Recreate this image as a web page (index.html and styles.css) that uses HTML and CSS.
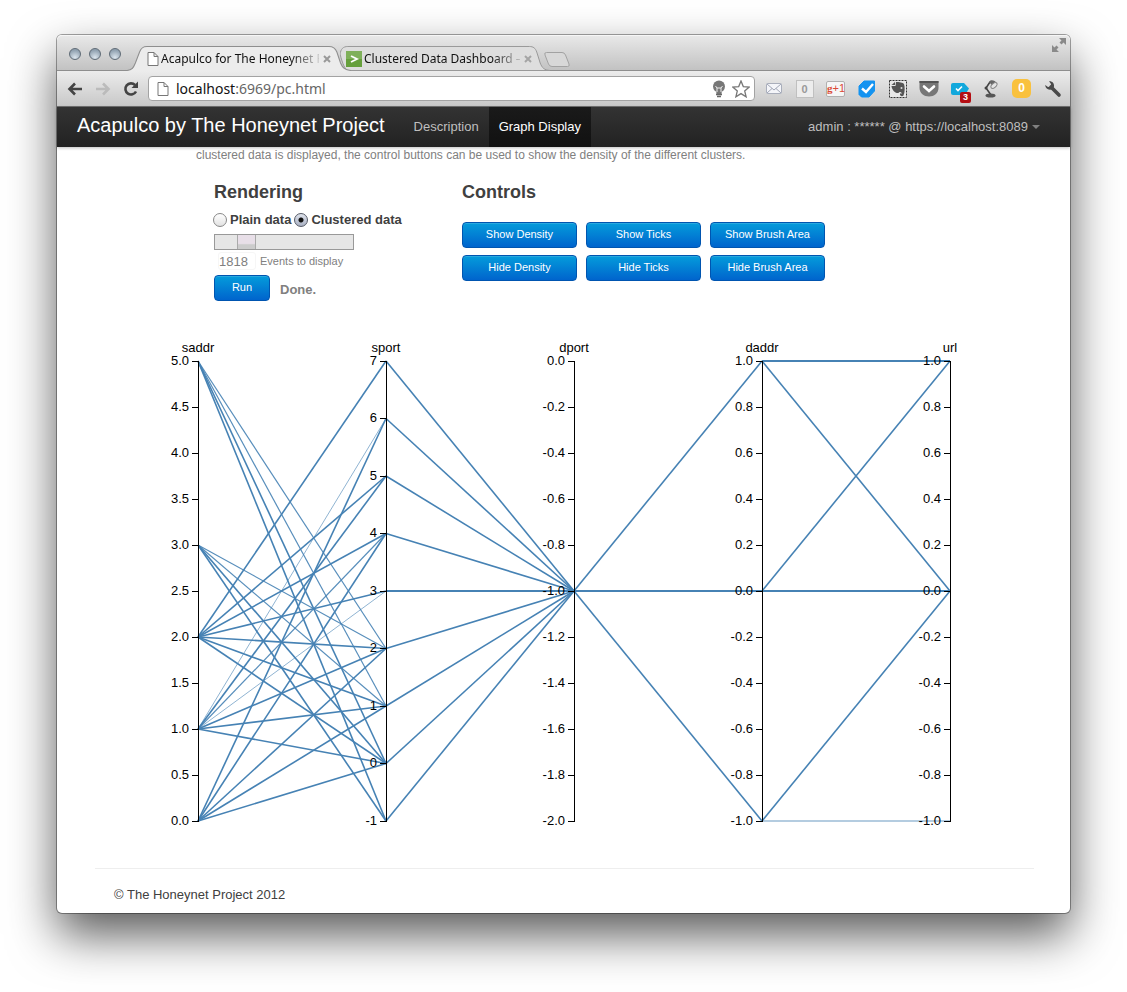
FILE: index.html
```html
<!DOCTYPE html>
<html lang="en">
<head>
<meta charset="utf-8">
<title>Acapulco for The Honeynet Project</title>
<link rel="stylesheet" href="styles.css">
</head>
<body>
<div class="window">
  <header class="titlebar">
    <div class="lights"><span class="light"></span><span class="light"></span><span class="light"></span></div>
    <div class="tabs">
      <div class="tab tab-active">
        <svg class="tab-shape" viewBox="0 0 214 25" preserveAspectRatio="none"><path d="M0 24.5C5 24 6 22 8 17L12 6C13.500 2 15 .5 19 .5H193C197 .5 199 2 200.500 6L204 17C206 22 208 24 214 24.500V25H0Z" fill="#ececec"/><path d="M0 24.500C5 24 6 22 8 17L12 6C13.500 2 15 .5 19 .5H193C197 .5 199 2 200.500 6L204 17C206 22 208 24 214 24.500" fill="none" stroke="#8e8e8e"/></svg>
        <svg class="page-icon" viewBox="0 0 12 14"><path d="M1 .5H7L11 4.500V13.500H1ZM7 .5V4.500H11" fill="#fff" stroke="#777"/></svg>
        <span class="tab-title">Acapulco for The Honeynet P</span>
        <button class="close" aria-label="Close tab"><svg viewBox="0 0 8 8"><path d="M1 1L7 7M7 1L1 7" stroke="#999" stroke-width="2"/></svg></button>
      </div>
      <div class="tab">
        <svg class="tab-shape" viewBox="0 0 214 25" preserveAspectRatio="none"><path d="M0 8C1 3 3 .5 8 .5H193C197 .5 199 2 200.500 6L204 17C206 22 208 24 214 24.500H8C5 23 3 19 0 8Z" fill="#dedede" stroke="#999"/></svg>
        <svg class="fav" viewBox="0 0 16 16"><rect width="16" height="16" fill="#66a03c"/><rect width="16" height="8" fill="#7fb05a"/><path d="M5 5L11 8L5 11" fill="none" stroke="#fff" stroke-width="1.800"/></svg>
        <span class="tab-title">Clustered Data Dashboard –</span>
        <button class="close" aria-label="Close tab"><svg viewBox="0 0 8 8"><path d="M1 1L7 7M7 1L1 7" stroke="#a5a5a5" stroke-width="2"/></svg></button>
      </div>
      <button class="new-tab" aria-label="New tab"><svg viewBox="0 0 28 17"><path d="M3.500 1.500H19Q21.500 1.500 22.500 4L26 13Q27 15.500 24.500 15.500H9Q6.500 15.500 5.500 13L2 4Q1 1.500 3.500 1.500Z" fill="#d8d8d8" stroke="#a2a2a2"/></svg></button>
    </div>
    <button class="expand" aria-label="Full screen"><svg viewBox="0 0 16 16"><path d="M8 1H15V8L12.500 5.500L10.500 7.500L8.500 5.500L10.500 3.500ZM8 15H1V8L3.500 10.500L5.500 8.500L7.500 10.500L5.500 12.500Z" fill="#8a8a8a"/></svg></button>
  </header>

  <div class="toolbar">
    <button class="tool nav-tool" aria-label="Back"><svg viewBox="0 0 18 18"><path d="M16 9H4M9 3.500L3.500 9L9 14.500" fill="none" stroke="#444" stroke-width="2.600"/></svg></button>
    <button class="tool nav-tool" aria-label="Forward"><svg viewBox="0 0 18 18"><path d="M2 9H14M9 3.500L14.500 9L9 14.500" fill="none" stroke="#bbb" stroke-width="2.600"/></svg></button>
    <button class="tool nav-tool" aria-label="Reload"><svg viewBox="0 0 18 18"><path d="M14 11.500A5.600 5.600 0 1 1 13 5" fill="none" stroke="#444" stroke-width="2.600"/><path d="M16 1.500V8H9.500Z" fill="#444"/></svg></button>
    <div class="address">
      <svg class="page-icon" viewBox="0 0 12 14"><path d="M1 .5H7L11 4.500V13.500H1ZM7 .5V4.500H11" fill="#fff" stroke="#777"/></svg>
      <div class="url" role="textbox" aria-label="Address"><span class="host">localhost</span>:6969/pc.html</div>
      <svg class="i18" viewBox="0 0 18 18"><circle cx="9" cy="6.500" r="6" fill="#777"/><path d="M6 10H12L11.500 14H6.500Z" fill="#777"/><path d="M7 12V8L5.500 6M11 12V8L12.500 6M7 8H11" fill="none" stroke="#eee"/><path d="M6 14.500H12M7 16.500H11" stroke="#666" stroke-width="1.500"/></svg>
      <svg class="i18" viewBox="0 0 18 18"><path d="M9 1L11.300 6.600L17.200 7L12.700 10.900L14.100 16.800L9 13.600L3.900 16.800L5.300 10.900L.8 7L6.700 6.600Z" fill="#fff" stroke="#777" stroke-width="1.300"/></svg>
    </div>
    <div class="extensions">
      <button class="tool" aria-label="Mail"><svg viewBox="0 0 20 20"><rect x="2.500" y="4.500" width="15" height="10" rx="1" fill="#f4f5f9" stroke="#a9aebb"/><path d="M3 5L10 11L17 5M3 14L8 9.500M17 14L12 9.500" fill="none" stroke="#a0a6b6"/></svg></button>
      <button class="tool" aria-label="Counter"><span class="badge-box">0</span></button>
      <button class="tool" aria-label="Plus one"><span class="plus-box"><b>g</b>+1</span></button>
      <button class="tool" aria-label="Verified"><svg viewBox="0 0 20 20"><path d="M7 2H17.500V12L12 18H4.500L2 15.500V7Z" fill="#1493f0" stroke="#1493f0" stroke-linejoin="round"/><path d="M5 9.500L9 13L16 5" fill="none" stroke="#fff" stroke-width="2.400"/></svg></button>
      <button class="tool" aria-label="Clip page"><svg viewBox="0 0 20 20"><rect x="1.500" y="1.500" width="17" height="17" fill="#e8e8e8" stroke="#333" stroke-dasharray="2 1"/><path d="M8 3C11 3 15 3.500 16 5C17 8 17 13 15.500 16.500C14 18 11.500 17 12 14.500L14 14.500C13 12.500 11 12.500 10.500 14C7 14.500 4 11 3.500 7H7.500Z" fill="#555"/><path d="M3.500 6L7 3V6Z" fill="#555"/><circle cx="13.500" cy="9" r="1" fill="#ddd"/></svg></button>
      <button class="tool" aria-label="Pocket"><svg viewBox="0 0 20 20"><path d="M.5 2H19.500V9C19.500 14 15 17.500 10 17.500S.5 14 .5 9Z" fill="#777"/><path d="M.5 2H19.500V4H.5Z" fill="#555"/><path d="M5 7.500L10 12L15 7.500" fill="none" stroke="#fff" stroke-width="2.600" stroke-linecap="round"/></svg></button>
      <button class="tool" aria-label="Tasks"><svg viewBox="0 0 20 20"><path d="M3 4H14L19 9.500L15 16H3Q1 16 1 14V6Q1 4 3 4Z" fill="#12a8dc"/><path d="M6 9.500L8 11.500L12 7.500" fill="none" stroke="#fff" stroke-width="1.600"/></svg><span class="count">3</span></button>
      <button class="tool" aria-label="Desk lamp"><svg viewBox="0 0 20 20"><path d="M9 3L5 9L10 16" fill="none" stroke="#444" stroke-width="1.600"/><path d="M8 3C9 0 15 1 16 5C16 8 14 8.500 12.500 8Z" fill="#666"/><ellipse cx="13" cy="6.500" rx="3.600" ry="2" transform="rotate(-40 13 6.500)" fill="#e4e4e4" stroke="#888"/><ellipse cx="9.500" cy="16.500" rx="5" ry="2" fill="#555"/><circle cx="5" cy="9" r="1.500" fill="#444"/></svg></button>
      <button class="tool" aria-label="Notifications"><span class="amber">0</span></button>
      <button class="tool" aria-label="Menu"><svg viewBox="0 0 20 20"><path d="M8 8L16 16" stroke="#4a4a4a" stroke-width="3.600" stroke-linecap="round"/><path d="M6 2.200C9 1.800 11.500 4 11 7.500C10.500 10.500 7 11.500 4.500 10C3 9 2.200 7.500 2.200 6L5 8L7.500 7.500L8 5Z" fill="#4a4a4a"/></svg></button>
    </div>
  </div>

  <nav class="navbar">
    <a class="brand" href="#">Acapulco by The Honeynet Project</a>
    <a class="nav-link" href="#">Description</a>
    <a class="nav-link nav-current" href="#">Graph Display</a>
    <a class="account" href="#">admin : ****** @ https://localhost:8089 <span class="caret"></span></a>
  </nav>

  <main class="page">
    <p class="intro">clustered data is displayed, the control buttons can be used to show the density of the different clusters.</p>
    <div class="panels">
      <section class="rendering">
        <h2>Rendering</h2>
        <div class="radios">
          <input type="radio" name="mode" id="plain"><label for="plain">Plain data</label>
          <input type="radio" name="mode" id="clustered" checked><label for="clustered">Clustered data</label>
        </div>
        <input class="slider" type="range" min="0" max="10000" value="1818" aria-label="Number of events">
        <div class="events">
          <input class="amount" type="text" id="amount" value="1818"><label for="amount">Events to display</label>
        </div>
        <div class="run-row"><button class="btn">Run</button><strong class="status">Done.</strong></div>
      </section>
      <section class="controls">
        <h2>Controls</h2>
        <div class="button-grid">
          <button class="btn">Show Density</button><button class="btn">Show Ticks</button><button class="btn">Show Brush Area</button>
          <button class="btn">Hide Density</button><button class="btn">Hide Ticks</button><button class="btn">Hide Brush Area</button>
        </div>
      </section>
    </div>
    <svg class="chart" id="chart" viewBox="0 0 939 504" role="img" aria-label="Parallel coordinates"></svg>
    <footer class="footer">© The Honeynet Project 2012</footer>
  </main>
</div>
<script src="chart.js"></script>
</body>
</html>
```
FILE: styles.css
```css
* { box-sizing: border-box; }
body {
  margin: 0;
  padding: 35px 57px 79px;
  background: #fff;
  font-family: "Liberation Sans", Arial, sans-serif;
  font-size: 13px;
  line-height: 18px;
  color: #404040;
}
button { border: 0; padding: 0; background: none; font-family: inherit; }
svg { display: block; }
a { text-decoration: none; }

.window {
  border-radius: 5px;
  background: #fff;
  box-shadow: 0 0 0 1px rgba(0, 0, 0, .35), 0 22px 48px rgba(0, 0, 0, .65);
}

/* Title bar and tabs */
.titlebar {
  display: flex;
  align-items: flex-end;
  height: 36px;
  padding-left: 12px;
  border-radius: 5px 5px 0 0;
  border-bottom: 1px solid #8e8e8e;
  background: linear-gradient(#e9e9e9, #c2c2c2);
  box-shadow: inset 0 1px #f6f6f6;
}
.lights { display: flex; gap: 8px; padding-bottom: 10px; }
.light {
  width: 12px;
  height: 12px;
  border: 1px solid #5f6b76;
  border-radius: 50%;
  background: radial-gradient(circle at 50% 85%, #dce6ee, #8fa0af 75%);
}
.tabs { display: flex; align-items: flex-end; margin: 0 0 -1px 6px; }
.tab {
  position: relative;
  display: flex;
  align-items: center;
  width: 210px;
  height: 25px;
  padding: 0 18px 0 6px;
  color: #111;
  font-family: "Noto Sans", sans-serif;
  font-size: 12px;
}
.tab + .tab { margin-left: -11px; }
.tab-active { z-index: 1; width: 224px; padding: 0 20px; }
.tab-shape { position: absolute; inset: 0; width: 100%; height: 100%; }
.page-icon { position: relative; flex: none; width: 12px; height: 14px; }
.fav { position: relative; flex: none; width: 16px; height: 16px; }
.tab-title {
  position: relative;
  flex: 1;
  min-width: 0;
  margin-left: 2px;
  white-space: nowrap;
  mask-image: linear-gradient(90deg, #000 82%, rgba(0, 0, 0, .15));
}
.close { position: relative; flex: none; width: 8px; margin: 0 0 0 4px; }
.new-tab { width: 28px; margin: 0 0 3px -7px; }
.expand { width: 16px; margin: 0 3px 17px auto; }

/* Toolbar */
.toolbar {
  display: flex;
  align-items: center;
  height: 36px;
  padding: 0 2px 0 4px;
  border-bottom: 1px solid #707070;
  background: linear-gradient(#ececec, #c8c8c8);
}
.tool { position: relative; display: grid; place-items: center; flex: none; width: 31px; height: 26px; }
.tool svg { width: 20px; height: 20px; }
.nav-tool { width: 28px; }
.nav-tool svg { width: 18px; height: 18px; }
.address {
  display: flex;
  flex: 1;
  align-items: center;
  gap: 4px;
  height: 25px;
  margin: 0 3px;
  padding: 0 4px 0 8px;
  border: 1px solid #a3a3a3;
  border-radius: 4px;
  background: #fff;
}
.url { flex: 1; margin-left: 3px; font-family: "Noto Sans", sans-serif; font-size: 14px; color: #666; outline: 0; }
.host { color: #111; }
.i18 { flex: none; width: 18px; height: 18px; }
.extensions { display: flex; }
.badge-box {
  width: 18px;
  height: 18px;
  border: 1px solid #c0c0c0;
  background: #ededed;
  color: #999;
  font: bold 11px/16px "Liberation Sans", sans-serif;
}
.plus-box {
  width: 19px;
  height: 16px;
  border: 1px solid #b0b0b0;
  border-radius: 2px;
  background: #f6f6f6;
  color: #db4a37;
  font: 11px/13px "Liberation Sans", sans-serif;
  white-space: nowrap;
}
.plus-box b { font-family: "Liberation Serif", serif; }
.count {
  position: absolute;
  right: 4px;
  bottom: -1px;
  width: 11px;
  height: 11px;
  border-radius: 2px;
  background: #b40d12;
  color: #fff;
  font: bold 9px/11px "Liberation Sans", sans-serif;
}
.amber {
  width: 19px;
  height: 19px;
  border-radius: 5px;
  background: #f9c13e;
  color: #fff;
  font: bold 12px/19px "Liberation Sans", sans-serif;
}

/* Site navigation */
.navbar {
  position: relative;
  display: flex;
  align-items: center;
  height: 40px;
  padding: 0 30px 0 20px;
  background: linear-gradient(#333, #222);
  box-shadow: 0 1px 3px rgba(0, 0, 0, .25);
}
.brand { margin-right: 19px; padding-bottom: 4px; color: #fff; font-size: 20px; line-height: 24px; }
.nav-link { padding: 0 10px; color: #bfbfbf; line-height: 40px; }
.nav-current { background: linear-gradient(#1a1a1a, #111); color: #fff; }
.account { display: flex; align-items: center; gap: 4px; margin-left: auto; color: #bfbfbf; }
.caret { border: 4px solid transparent; border-top-color: #808080; border-bottom: 0; }

/* Page */
.page { padding: 0 36px 9px 38px; }
.intro { margin: 0 0 0 101px; color: #808080; font-size: 12px; line-height: 17px; }
.panels { display: flex; margin: 10px 0 0 119px; min-height: 161px; }
.rendering { width: 248px; }
h2 { margin: 0; font-size: 18px; line-height: 36px; }
.radios { display: flex; align-items: center; height: 19px; font-weight: bold; }
.radios input {
  appearance: none;
  width: 14px;
  height: 14px;
  margin: 0 3px 0 -1px;
  border: 1px solid #888;
  border-radius: 50%;
  background: linear-gradient(#fff, #e2e2e2);
}
.radios label + input { margin-left: 3px; }
.radios input:checked { border-color: #555a66; background: radial-gradient(circle, #111 2px, transparent 3px), linear-gradient(#dfe3ec, #a9b0c2); }
.slider {
  appearance: none;
  display: block;
  width: 140px;
  height: 16px;
  margin: 5px 0 2px;
  border: 1px solid #999;
  background: #e6e6e6;
}
.slider::-webkit-slider-thumb {
  appearance: none;
  width: 19px;
  height: 14px;
  border: solid #aaa;
  border-width: 0 1px;
  background: linear-gradient(#e8dfe8 60%, #ccc 70%);
}
.events { display: flex; align-items: center; margin-left: 4px; height: 18px; color: #808080; font-size: 11px; }
.amount { width: 38px; height: 18px; margin-right: 4px; padding: 0; border: 1px solid #f6f6f6; border-radius: 3px; background: #fff; color: #808080; font: 13px "Liberation Sans", sans-serif; }
.run-row { display: flex; align-items: center; gap: 10px; margin-top: 5px; }
.run-row .btn { width: 56px; }
.status { padding-top: 3px; color: #808080; }
.btn {
  height: 26px;
  padding-bottom: 2px;
  border: 1px solid #0055b0;
  border-radius: 4px;
  background: linear-gradient(#049cdb, #0064cd);
  box-shadow: inset 0 1px rgba(255, 255, 255, .15);
  color: #fff;
  font-size: 11px;
  line-height: 18px;
}
.button-grid { display: grid; grid-template-columns: repeat(3, 115px); gap: 7px 9px; margin-top: 12px; }

.chart { width: 100%; margin-bottom: 29px; }
.chart text { font-size: 13px; fill: #000; text-anchor: end; }
.chart .name { text-anchor: middle; }
.axis { fill: none; stroke: #000; shape-rendering: crispEdges; }
.link { stroke: #4682b4; stroke-width: 1.6px; }
.level { stroke-width: 2px; shape-rendering: crispEdges; }
.medium { stroke-width: 1.2px; opacity: .9; }
.faint { stroke-width: 1px; opacity: .6; }
.pale { opacity: .4; }
.footer { padding: 17px 19px 0; border-top: 1px solid #eee; }
```
FILE: chart.js
```javascript
const TOP = 26;
const HEIGHT = 460;
const FIRST = 103;
const STEP = 188;

const axes = [
  { name: "saddr", min: 0, max: 5, step: 0.5, digits: 1 },
  { name: "sport", min: -1, max: 7, step: 1, digits: 0 },
  { name: "dport", min: -2, max: 0, step: 0.2, digits: 1 },
  { name: "daddr", min: -1, max: 1, step: 0.2, digits: 1 },
  { name: "url", min: -1, max: 1, step: 0.2, digits: 1 }
];

// Each link: value on the left axis, value on the right axis, optional weight.
const links = [
  [[5, 2, "medium"], [5, 1, "medium"], [5, 0], [5, -1],
   [3, 2, "medium"], [3, 1, "medium"], [3, 0], [3, -1],
   [2, 7], [2, 5], [2, 4], [2, 3], [2, 2], [2, 1], [2, 0],
   [1, 6, "faint"], [1, 5], [1, 4, "medium"], [1, 3, "faint"], [1, 2], [1, 1], [1, 0],
   [0, 6], [0, 4], [0, 2], [0, 1], [0, 0]],
  [[7, -1], [6, -1], [5, -1], [4, -1], [3, -1, "level"], [2, -1], [1, -1], [0, -1], [-1, -1]],
  [[-1, 1], [-1, 0, "level"], [-1, -1]],
  [[1, 1, "level"], [1, 0], [0, 1], [0, 0, "level"], [-1, 0], [-1, -1, "level pale"]]
];

const chart = document.getElementById("chart");
const x = i => FIRST + i * STEP;
const y = (axis, v) => TOP + HEIGHT * (axis.max - v) / (axis.max - axis.min);

function add(tag, attrs, text) {
  const el = document.createElementNS("http://www.w3.org/2000/svg", tag);
  for (const key in attrs) el.setAttribute(key, attrs[key]);
  if (text !== undefined) el.textContent = text;
  chart.appendChild(el);
}

links.forEach((group, i) => group.forEach(([a, b, weight]) => add("line", {
  class: "link " + (weight || ""),
  x1: x(i), y1: y(axes[i], a), x2: x(i + 1), y2: y(axes[i + 1], b)
})));

axes.forEach((axis, i) => {
  const count = Math.round((axis.max - axis.min) / axis.step);
  add("path", { class: "axis", d: `M${x(i) - 6} ${TOP + 0.5}H${x(i) + 0.5}V${TOP + HEIGHT + 0.5}H${x(i) - 6}` });
  for (let n = 0; n <= count; n++) {
    const value = axis.max - n * axis.step;
    const label = value.toFixed(axis.digits).replace(/^-(0\.0)$/, "$1");
    const ty = Math.floor(y(axis, value));
    add("path", { class: "axis", d: `M${x(i) - 6} ${ty + 0.5}H${x(i)}` });
    add("text", { x: x(i) - 9, y: ty + 4 }, label);
  }
  add("text", { class: "name", x: x(i), y: TOP - 9 }, axis.name);
});
```
